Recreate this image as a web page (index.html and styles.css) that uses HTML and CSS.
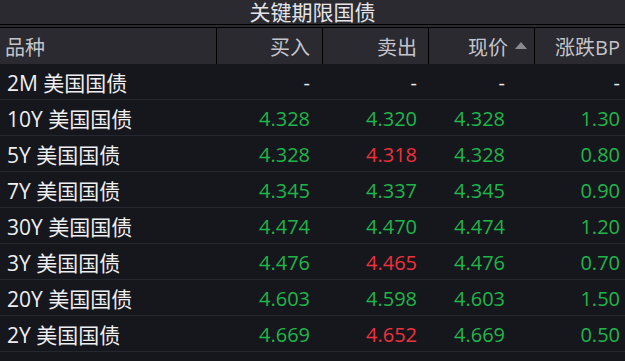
FILE: index.html
```html
<!DOCTYPE html>
<html lang="zh-CN">
<head>
    <meta charset="UTF-8">
    <title>关键期限国债</title>
    <link rel="stylesheet" href="styles.css">
</head>
<body>
    <div class="title">关键期限国债</div>
    <div class="title-rule"></div>

    <div class="head row-grid">
        <div class="cell name">品种</div>
        <div class="cell num c2">买入</div>
        <div class="cell num c3">卖出</div>
        <div class="cell num c4h">现价<span class="sort"></span></div>
        <div class="cell num c5">涨跌BP</div>
    </div>

    <div class="rows">
        <div class="row row-grid">
            <div class="cell name">2M 美国国债</div>
            <div class="cell num c2 dash">-</div>
            <div class="cell num c3 dash">-</div>
            <div class="cell num c4 dash">-</div>
            <div class="cell num c5 dash">-</div>
        </div>
        <div class="row row-grid">
            <div class="cell name">10Y 美国国债</div>
            <div class="cell num c2 up">4.328</div>
            <div class="cell num c3 up">4.320</div>
            <div class="cell num c4 up">4.328</div>
            <div class="cell num c5 up">1.30</div>
        </div>
        <div class="row row-grid">
            <div class="cell name">5Y 美国国债</div>
            <div class="cell num c2 up">4.328</div>
            <div class="cell num c3 down">4.318</div>
            <div class="cell num c4 up">4.328</div>
            <div class="cell num c5 up">0.80</div>
        </div>
        <div class="row row-grid">
            <div class="cell name">7Y 美国国债</div>
            <div class="cell num c2 up">4.345</div>
            <div class="cell num c3 up">4.337</div>
            <div class="cell num c4 up">4.345</div>
            <div class="cell num c5 up">0.90</div>
        </div>
        <div class="row row-grid">
            <div class="cell name">30Y 美国国债</div>
            <div class="cell num c2 up">4.474</div>
            <div class="cell num c3 up">4.470</div>
            <div class="cell num c4 up">4.474</div>
            <div class="cell num c5 up">1.20</div>
        </div>
        <div class="row row-grid">
            <div class="cell name">3Y 美国国债</div>
            <div class="cell num c2 up">4.476</div>
            <div class="cell num c3 down">4.465</div>
            <div class="cell num c4 up">4.476</div>
            <div class="cell num c5 up">0.70</div>
        </div>
        <div class="row row-grid">
            <div class="cell name">20Y 美国国债</div>
            <div class="cell num c2 up">4.603</div>
            <div class="cell num c3 up">4.598</div>
            <div class="cell num c4 up">4.603</div>
            <div class="cell num c5 up">1.50</div>
        </div>
        <div class="row row-grid">
            <div class="cell name">2Y 美国国债</div>
            <div class="cell num c2 up">4.669</div>
            <div class="cell num c3 down">4.652</div>
            <div class="cell num c4 up">4.669</div>
            <div class="cell num c5 up">0.50</div>
        </div>
        <div class="row row-grid">
            <div class="cell name">1Y 美国国债</div>
            <div class="cell num c2 up">4.690</div>
            <div class="cell num c3 down">4.671</div>
            <div class="cell num c4 up">4.690</div>
            <div class="cell num c5 up">0.40</div>
        </div>
    </div>
</body>
</html>
```

FILE: styles.css
```css
body, html {
    margin: 0;
    padding: 0;
    overflow: hidden;
}

body {
    background-color: #15171c;
    font-family: "Open Sans", "Noto Sans CJK SC", sans-serif;
    color: #e8e8ea;
}

/* 标题栏 */
.title {
    height: 24px;
    line-height: 24px;
    background-color: #2a2a30;
    text-align: center;
    font-size: 21px;
    color: #e4e4e8;
}

.title-rule {
    height: 2px;
    background-color: #2a2a30;
    border-top: 1px solid #000;
    border-bottom: 1px solid #000;
}

.row-grid {
    display: grid;
    grid-template-columns: 216px 106px 106px 106px 91px;
}

/* 表头 */
.head {
    height: 36px;
    background-color: #2a2a30;
    color: #c4c4cc;
}

.head .cell + .cell {
    border-left: 1px solid #000;
}

.head .name {
    padding-left: 5px;
    font-size: 20px;
    color: #c4c4cc;
}

.cell {
    display: flex;
    align-items: center;
    font-size: 20px;
    white-space: nowrap;
}

.name {
    padding-left: 7px;
    font-size: 21px;
}

.num {
    justify-content: flex-end;
}

.c2 { padding-right: 12px; }
.c3 { padding-right: 11px; }
.c4 { padding-right: 29px; }
.c4h { padding-right: 7px; }
.c5 { padding-right: 5px; }

.sort {
    width: 0;
    height: 0;
    margin-left: 7px;
    margin-bottom: 2px;
    border-left: 6px solid transparent;
    border-right: 6px solid transparent;
    border-bottom: 7px solid #8a8a90;
}

/* 数据行 */
.row {
    height: 35px;
    border-bottom: 1px solid #25282e;
}

.row .num {
    padding-top: 1px;
}

.name {
    color: #eeeef0;
}

.up {
    color: #1fb54b;
}

.down {
    color: #f0303c;
}

.dash {
    color: #e8e8ea;
}
```
